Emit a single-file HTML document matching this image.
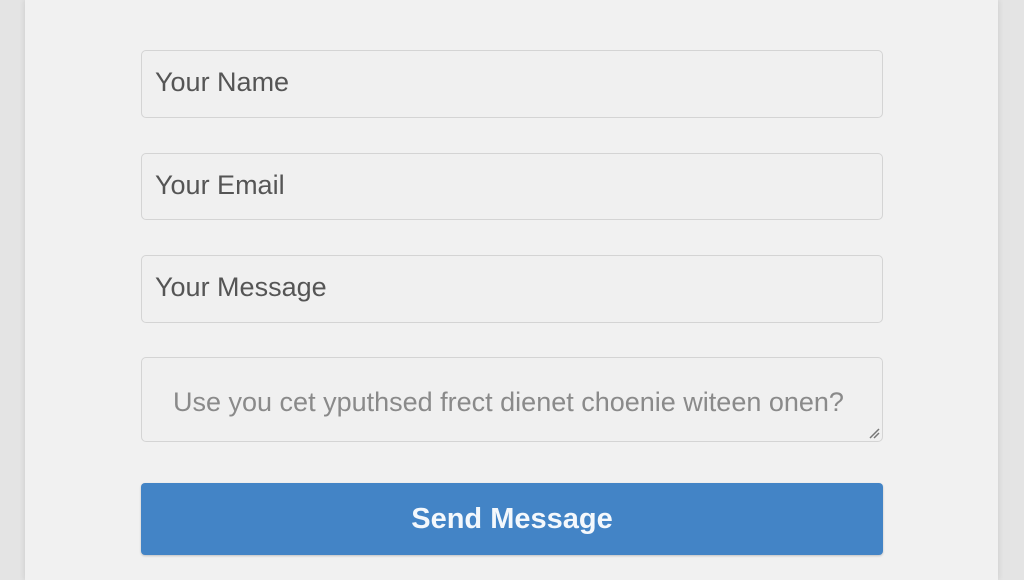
<!DOCTYPE html>
<html><head><style>
html,body{margin:0;padding:0;width:1024px;height:580px;overflow:hidden;background:#e4e4e4;font-family:"Liberation Sans",sans-serif}
.panel{position:absolute;left:25px;top:0;width:973px;height:580px;background:#f1f1f1;box-shadow:0 0 6px rgba(0,0,0,.12)}
.f{position:absolute;left:141px;width:742px;border:1.5px solid #d4d4d4;border-radius:5px;background:#f0f0f0;box-sizing:border-box;color:#555;font-size:27px;padding-left:13px}
.btn{position:absolute;left:141px;top:483px;width:742px;height:72px;background:#4384c6;border-radius:4px;color:#f4f8fc;font-size:29px;font-weight:bold;text-align:center;line-height:72px;box-shadow:0 1px 2px rgba(0,0,0,.2)}
</style></head><body>
<div class="panel"></div>
<div class="f" style="top:50px;height:68px;line-height:62px">Your Name</div>
<div class="f" style="top:153px;height:67px;line-height:62px">Your Email</div>
<div class="f" style="top:255px;height:68px;line-height:62px">Your Message</div>
<div class="f" style="top:357px;height:85px;line-height:88px;color:#8a8a8a;font-size:27px;padding-left:31px;white-space:nowrap">Use you cet yputhsed frect dienet choenie witeen onen?
<svg style="position:absolute;right:2px;bottom:2px" width="12" height="12"><path d="M2 11L11 2M6 11L11 6" stroke="#777" stroke-width="1.5"/></svg></div>
<div class="btn">Send Message</div>
</body></html>
